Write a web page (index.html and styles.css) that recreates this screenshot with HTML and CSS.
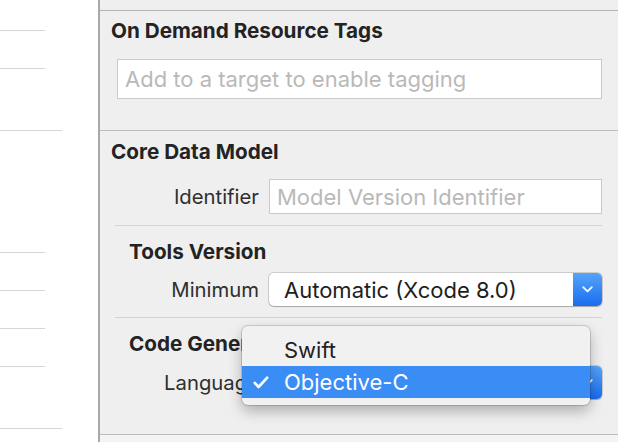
FILE: index.html
```html
<!DOCTYPE html>
<html>
<head>
<meta charset="utf-8">
<link rel="stylesheet" href="styles.css">
</head>
<body>
<div class="window">
  <div class="list">
    <div class="li li-a"></div>
    <div class="li li-s"></div>
    <div class="li li-m wide"></div>
    <div class="li li-l"></div>
    <div class="li li-s"></div>
    <div class="li li-s"></div>
    <div class="li li-s"></div>
    <div class="li li-m wide"></div>
  </div>
  <div class="inspector">
    <div class="top-strip"></div>
    <section class="sec sec-odr">
      <h2 class="sec-title">On Demand Resource Tags</h2>
      <div class="field field-tags">Add to a target to enable tagging</div>
    </section>
    <section class="sec sec-cdm">
      <h2 class="sec-title">Core Data Model</h2>
      <div class="row row-ident">
        <span class="label">Identifier</span>
        <div class="field field-ident">Model Version Identifier</div>
      </div>
      <div class="sub sub-tools">
        <h3 class="sub-title">Tools Version</h3>
        <div class="row">
          <span class="label">Minimum</span>
          <div class="popup">
            <span class="popup-text">Automatic (Xcode 8.0)</span>
            <span class="popup-btn">
              <svg width="11" height="7" viewBox="0 0 11 7"><path d="M1.2 1.2 L5.5 5.3 L9.8 1.2" fill="none" stroke="#fff" stroke-width="1.8" stroke-linecap="round" stroke-linejoin="round"/></svg>
            </span>
          </div>
        </div>
      </div>
      <div class="sub sub-code">
        <h3 class="sub-title">Code Generation</h3>
        <div class="row">
          <span class="label">Language</span>
          <div class="popup">
            <span class="popup-text">Objective-C</span>
            <span class="popup-btn">
              <svg width="11" height="7" viewBox="0 0 11 7"><path d="M1.2 1.2 L5.5 5.3 L9.8 1.2" fill="none" stroke="#fff" stroke-width="1.8" stroke-linecap="round" stroke-linejoin="round"/></svg>
            </span>
          </div>
        </div>
        <div class="menu">
          <div class="menu-item">Swift</div>
          <div class="menu-item selected">
            <svg class="check" width="16" height="13" viewBox="0 0 16 13"><path d="M1.8 7 L5.6 11 L14.2 1.6" fill="none" stroke="#fff" stroke-width="2.6" stroke-linecap="round" stroke-linejoin="round"/></svg>
            Objective-C
          </div>
        </div>
      </div>
    </section>
    <div class="bottom-strip"></div>
  </div>
</div>
</body>
</html>
```

FILE: styles.css
```css
html, body {
  margin: 0;
  padding: 0;
  width: 618px;
  height: 442px;
  overflow: hidden;
  font-family: Inter, "Noto Sans", sans-serif;
}

.window {
  display: flex;
  width: 618px;
  height: 442px;
}

/* left list */
.list {
  width: 98px;
  flex: none;
  background: #ffffff;
  display: flex;
  flex-direction: column;
}
.li {
  width: 45px;
  box-sizing: border-box;
  border-bottom: 1px solid #d6d6d6;
}
.li.wide { width: 62px; }
.li-a { height: 31px; }
.li-s { height: 38px; }
.li-m { height: 62px; }
.li-l { height: 122px; }

/* inspector */
.inspector {
  flex: 1;
  background: #efefef;
  border-left: 2px solid #a9a9a9;
  display: flex;
  flex-direction: column;
}
.top-strip {
  height: 10px;
  border-bottom: 1px solid #b4b4b4;
  flex: none;
}
.sec {
  padding: 8px 16px 0 11px;
  border-bottom: 1px solid #bdbdbd;
  flex: none;
  box-sizing: border-box;
}
.sec-odr { height: 120px; }
.sec-cdm { height: 304px; position: relative; padding-top: 9px; }

.sec-title {
  margin: 0;
  font-size: 20.7px;
  line-height: 24px;
  font-weight: 700;
  color: #232323;
}
.field {
  background: #ffffff;
  border: 1px solid #c9c9c9;
  box-sizing: border-box;
  color: #b9b9b9;
  font-size: 22px;
  display: flex;
  align-items: center;
}
.field-tags {
  margin: 16px 0 0 6px;
  height: 40px;
  padding-left: 7px;
}
.row {
  display: grid;
  grid-template-columns: 158px 1fr;
  align-items: center;
}
.label {
  text-align: right;
  padding-right: 10px;
  font-size: 20.3px;
  color: #2e2e2e;
}
.row-ident { margin-top: 15px; }
.field-ident {
  height: 35px;
  padding-left: 7px;
}

.sub {
  margin-left: 4px;
  border-top: 1px solid #d3d3d3;
  padding-left: 14px;
  padding-top: 14px;
  box-sizing: border-box;
}
.sub-tools { margin-top: 11px; height: 92px; }
.sub .row { margin-left: -18px; }
.sub-title {
  margin: 0;
  font-size: 20.7px;
  line-height: 24px;
  font-weight: 700;
  color: #232323;
}
.sub-tools .row { margin-top: 9px; }
.sub-code .row { margin-top: 10px; }

.popup {
  height: 33px;
  display: flex;
  border-radius: 5px;
  background: #fff;
  box-shadow: 0 0 0 1px rgba(0,0,0,0.14), 0 1px 1px rgba(0,0,0,0.18);
  overflow: hidden;
}
.popup-text {
  flex: 1;
  padding-left: 15px;
  font-size: 22px;
  color: #1e1e1e;
  display: flex;
  align-items: center;
}
.popup-btn {
  width: 29px;
  background: linear-gradient(#56a4fa, #1a6cf0);
  display: flex;
  align-items: center;
  justify-content: center;
}

.menu {
  position: absolute;
  left: 142px;
  top: 195px;
  width: 348px;
  padding: 8px 0 7px;
  background: #f1f1f1;
  border-radius: 6px;
  box-shadow: 0 0 0 1px rgba(0,0,0,0.14), 0 6px 14px rgba(0,0,0,0.28);
}
.menu-item {
  height: 32px;
  padding-left: 42px;
  position: relative;
  display: flex;
  align-items: center;
  font-size: 22px;
  color: #222;
}
.menu-item.selected {
  background: #3b8df6;
  color: #fff;
}
.check {
  position: absolute;
  left: 11px;
  top: 10px;
}

.bottom-strip {
  flex: 1;
  background: #f4f4f4;
}
```
